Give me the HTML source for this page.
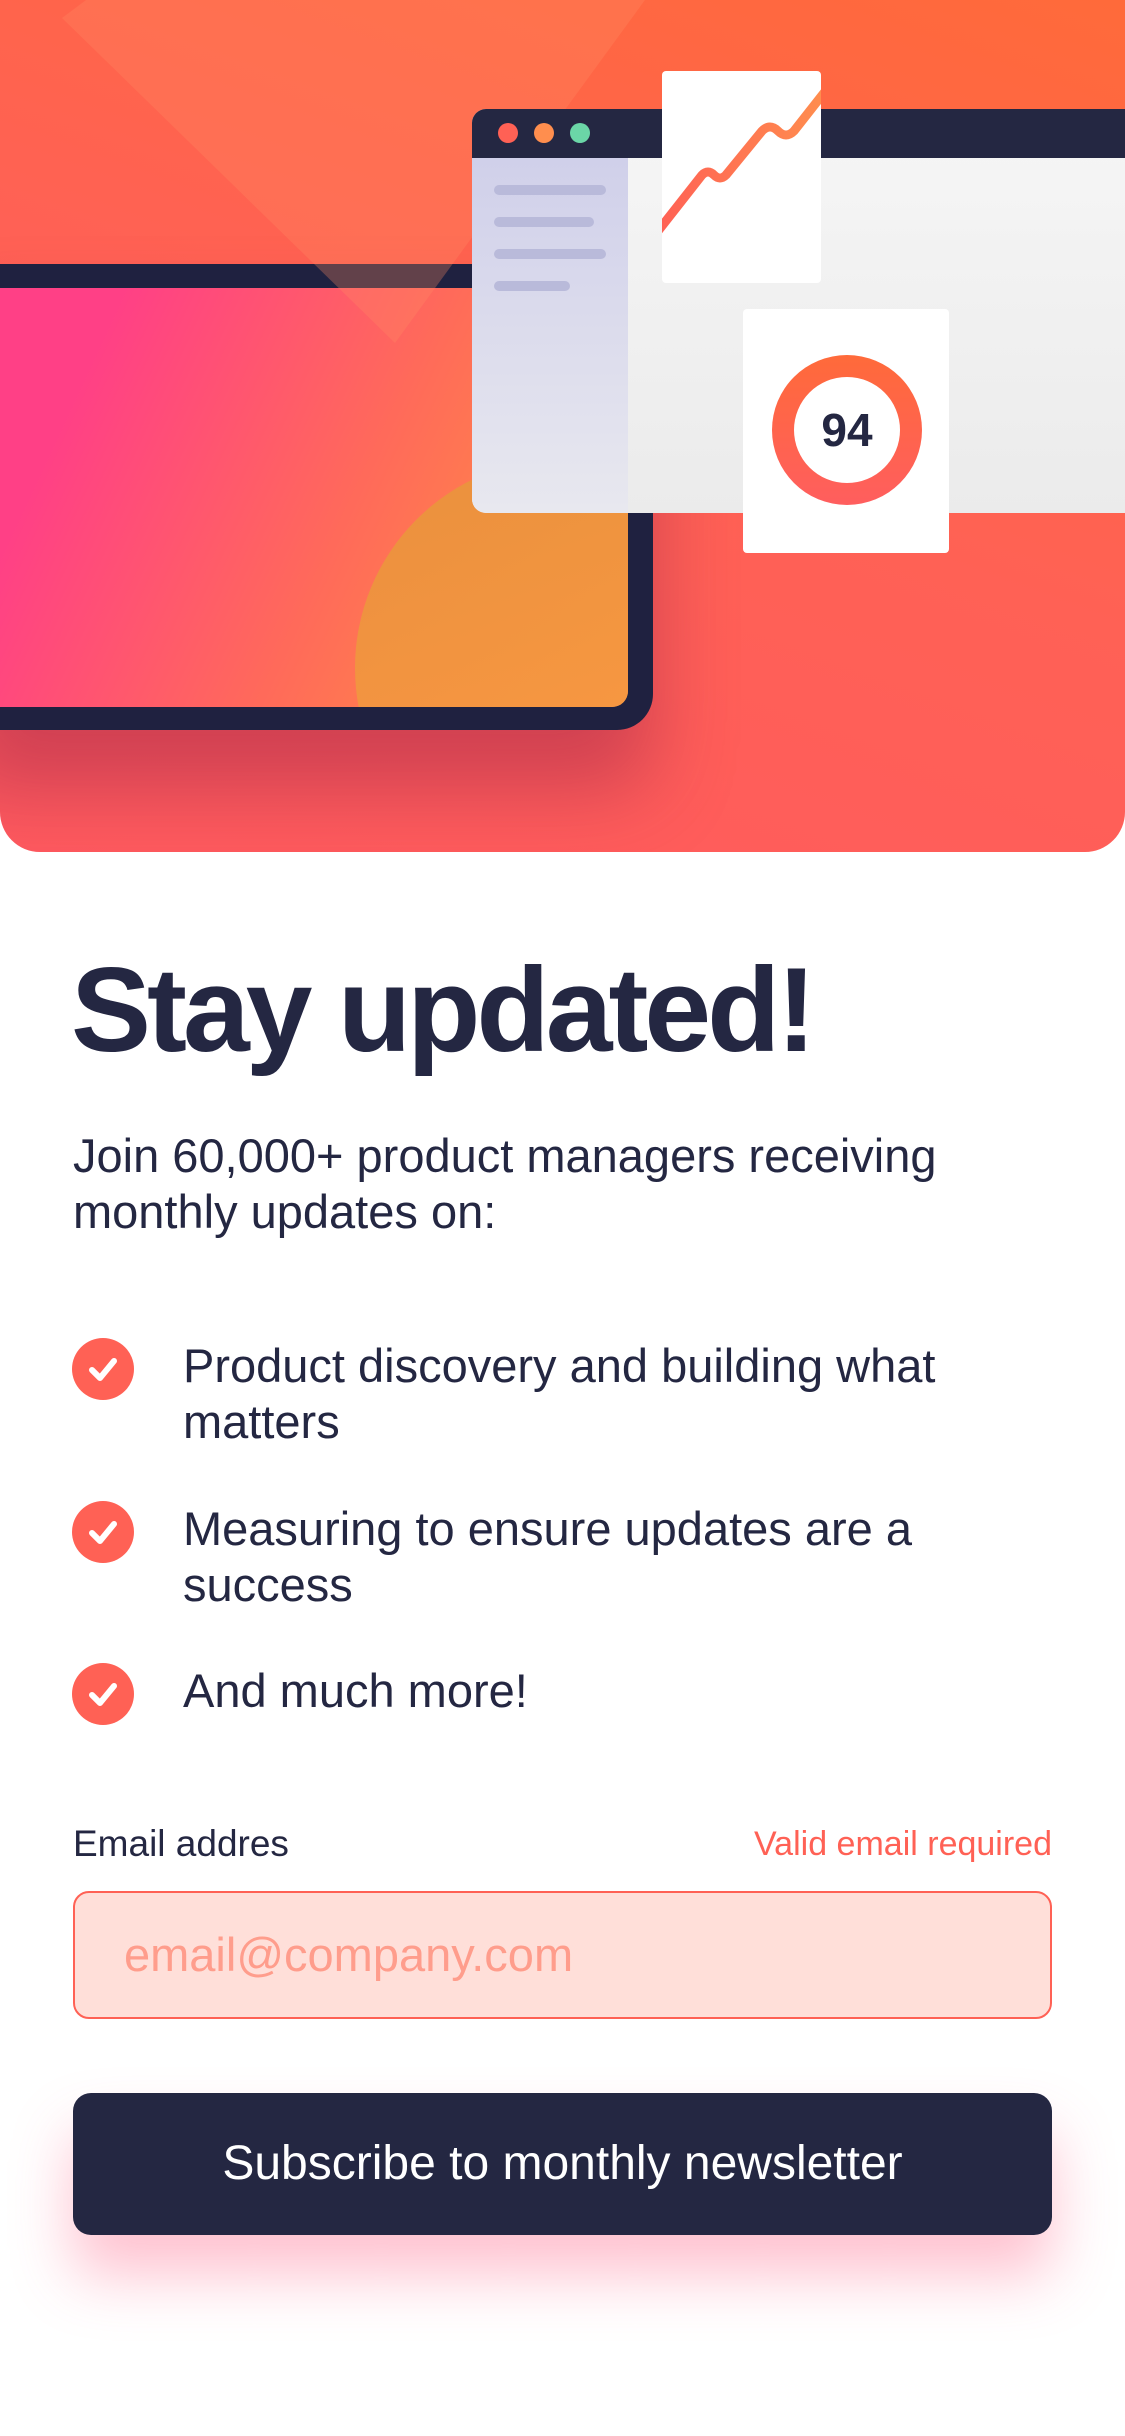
<!DOCTYPE html>
<html><head><meta charset="utf-8"><style>
*{margin:0;padding:0;box-sizing:border-box}
body{width:1125px;height:2436px;background:#fff;font-family:"Liberation Sans",Arial,sans-serif;color:#242742;position:relative;overflow:hidden}
.abs{position:absolute}
.hero{left:0;top:0;width:1125px;height:852px;border-radius:0 0 40px 40px;overflow:hidden;background:linear-gradient(200deg,#ff6a3a 0%,#ff6155 50%,#ff5a5f 100%)}
.t{position:absolute;white-space:nowrap}
.li{font-size:47px;line-height:56px;left:183px}
.chk{left:72px;width:62px;height:62px;border-radius:50%;background:#ff6155}
</style></head><body>
<div class="abs hero">
  <!-- laptop -->
  <div class="abs" style="left:-40px;top:264px;width:693px;height:466px;background:#1f2140;border-radius:0 0 36px 0;box-shadow:0 60px 80px rgba(150,30,70,0.45)"></div>
  <div class="abs" style="left:0;top:288px;width:628px;height:419px;border-radius:0 0 16px 0;overflow:hidden;background:linear-gradient(115deg,#ff4086 15%,#ff6a5a 55%,#ff9a3c 100%)">
    <div class="abs" style="left:355px;top:170px;width:420px;height:420px;border-radius:50%;background:linear-gradient(160deg,#e8923c,#ff9a45);opacity:.95"></div>
  </div>
  <div class="abs" style="left:0;top:0;width:700px;height:400px;background:rgba(255,140,100,0.3);clip-path:polygon(62px 18px,86px 0,645px 0,395px 343px)"></div>
  <!-- browser window -->
  <div class="abs" style="left:472px;top:109px;width:700px;height:404px;border-radius:14px;overflow:hidden;background:linear-gradient(#f6f6f6,#ebebeb)">
    <div class="abs" style="left:0;top:0;width:700px;height:49px;background:#242742"></div>
    <div class="abs" style="left:26px;top:14px;width:20px;height:20px;border-radius:50%;background:#ff6155"></div>
    <div class="abs" style="left:62px;top:14px;width:20px;height:20px;border-radius:50%;background:#ff8e4e"></div>
    <div class="abs" style="left:98px;top:14px;width:20px;height:20px;border-radius:50%;background:#6bd6a7"></div>
    <div class="abs" style="left:0;top:49px;width:156px;height:355px;background:linear-gradient(#d0d0ea,#e8e8ef)"></div>
    <div class="abs" style="left:22px;top:76px;width:112px;height:10px;border-radius:5px;background:#b9bada"></div>
    <div class="abs" style="left:22px;top:108px;width:100px;height:10px;border-radius:5px;background:#b9bada"></div>
    <div class="abs" style="left:22px;top:140px;width:112px;height:10px;border-radius:5px;background:#b9bada"></div>
    <div class="abs" style="left:22px;top:172px;width:76px;height:10px;border-radius:5px;background:#b9bada"></div>
  </div>
  <!-- chart card -->
  <div class="abs" style="left:662px;top:71px;width:159px;height:212px;background:#fff;border-radius:4px;overflow:hidden">
    <svg width="159" height="212" viewBox="0 0 159 212"><defs><linearGradient id="g" x1="0" x2="1"><stop offset="0" stop-color="#ff6155"/><stop offset="1" stop-color="#ff8e4e"/></linearGradient></defs>
    <path d="M-4 160 L40 104 Q46 98 52 104 Q58 110 64 104 L100 60 Q108 52 116 60 Q124 68 132 60 L165 18" fill="none" stroke="url(#g)" stroke-width="9" stroke-linejoin="round"/></svg>
  </div>
  <!-- score card -->
  <div class="abs" style="left:743px;top:309px;width:206px;height:244px;background:#fff;border-radius:4px">
    <div class="abs" style="left:29px;top:46px;width:150px;height:150px;border-radius:50%;background:linear-gradient(#ff6a3a,#ff5e5e)"></div>
    <div class="abs" style="left:51px;top:68px;width:106px;height:106px;border-radius:50%;background:#fff;text-align:center;font-weight:bold;font-size:46px;line-height:106px;color:#242742">94</div>
  </div>
</div>

<div class="t" style="left:71px;top:940px;font-size:120px;font-weight:bold;letter-spacing:-4px;line-height:140px">Stay updated!</div>
<div class="t" style="left:73px;top:1128px;font-size:47px;line-height:56px">Join 60,000+ product managers receiving<br>monthly updates on:</div>

<div class="abs chk" style="top:1338px"><svg width="62" height="62"><path d="M20 32 L28 40 L42 23" fill="none" stroke="#fff" stroke-width="6" stroke-linecap="round" stroke-linejoin="round"/></svg></div>
<div class="t li" style="top:1338px">Product discovery and building what<br>matters</div>
<div class="abs chk" style="top:1501px"><svg width="62" height="62"><path d="M20 32 L28 40 L42 23" fill="none" stroke="#fff" stroke-width="6" stroke-linecap="round" stroke-linejoin="round"/></svg></div>
<div class="t li" style="top:1501px">Measuring to ensure updates are a<br>success</div>
<div class="abs chk" style="top:1663px"><svg width="62" height="62"><path d="M20 32 L28 40 L42 23" fill="none" stroke="#fff" stroke-width="6" stroke-linecap="round" stroke-linejoin="round"/></svg></div>
<div class="t li" style="top:1663px">And much more!</div>

<div class="t" style="left:73px;top:1822px;font-size:37px;line-height:44px">Email addres</div>
<div class="t" style="right:73px;top:1822px;font-size:34px;line-height:44px;color:#ff6155">Valid email required</div>
<div class="abs" style="left:73px;top:1891px;width:979px;height:128px;border:2px solid #ff6155;border-radius:16px;background:#ffdfd9"></div>
<div class="t" style="left:124px;top:1928px;font-size:47px;line-height:54px;color:#ff9d8c">email@company.com</div>
<div class="abs" style="left:73px;top:2093px;width:979px;height:142px;border-radius:18px;background:#242742;box-shadow:0 40px 60px rgba(255,80,120,0.35);color:#fff;font-size:48px;line-height:142px;text-align:center">Subscribe to monthly newsletter</div>
</body></html>
